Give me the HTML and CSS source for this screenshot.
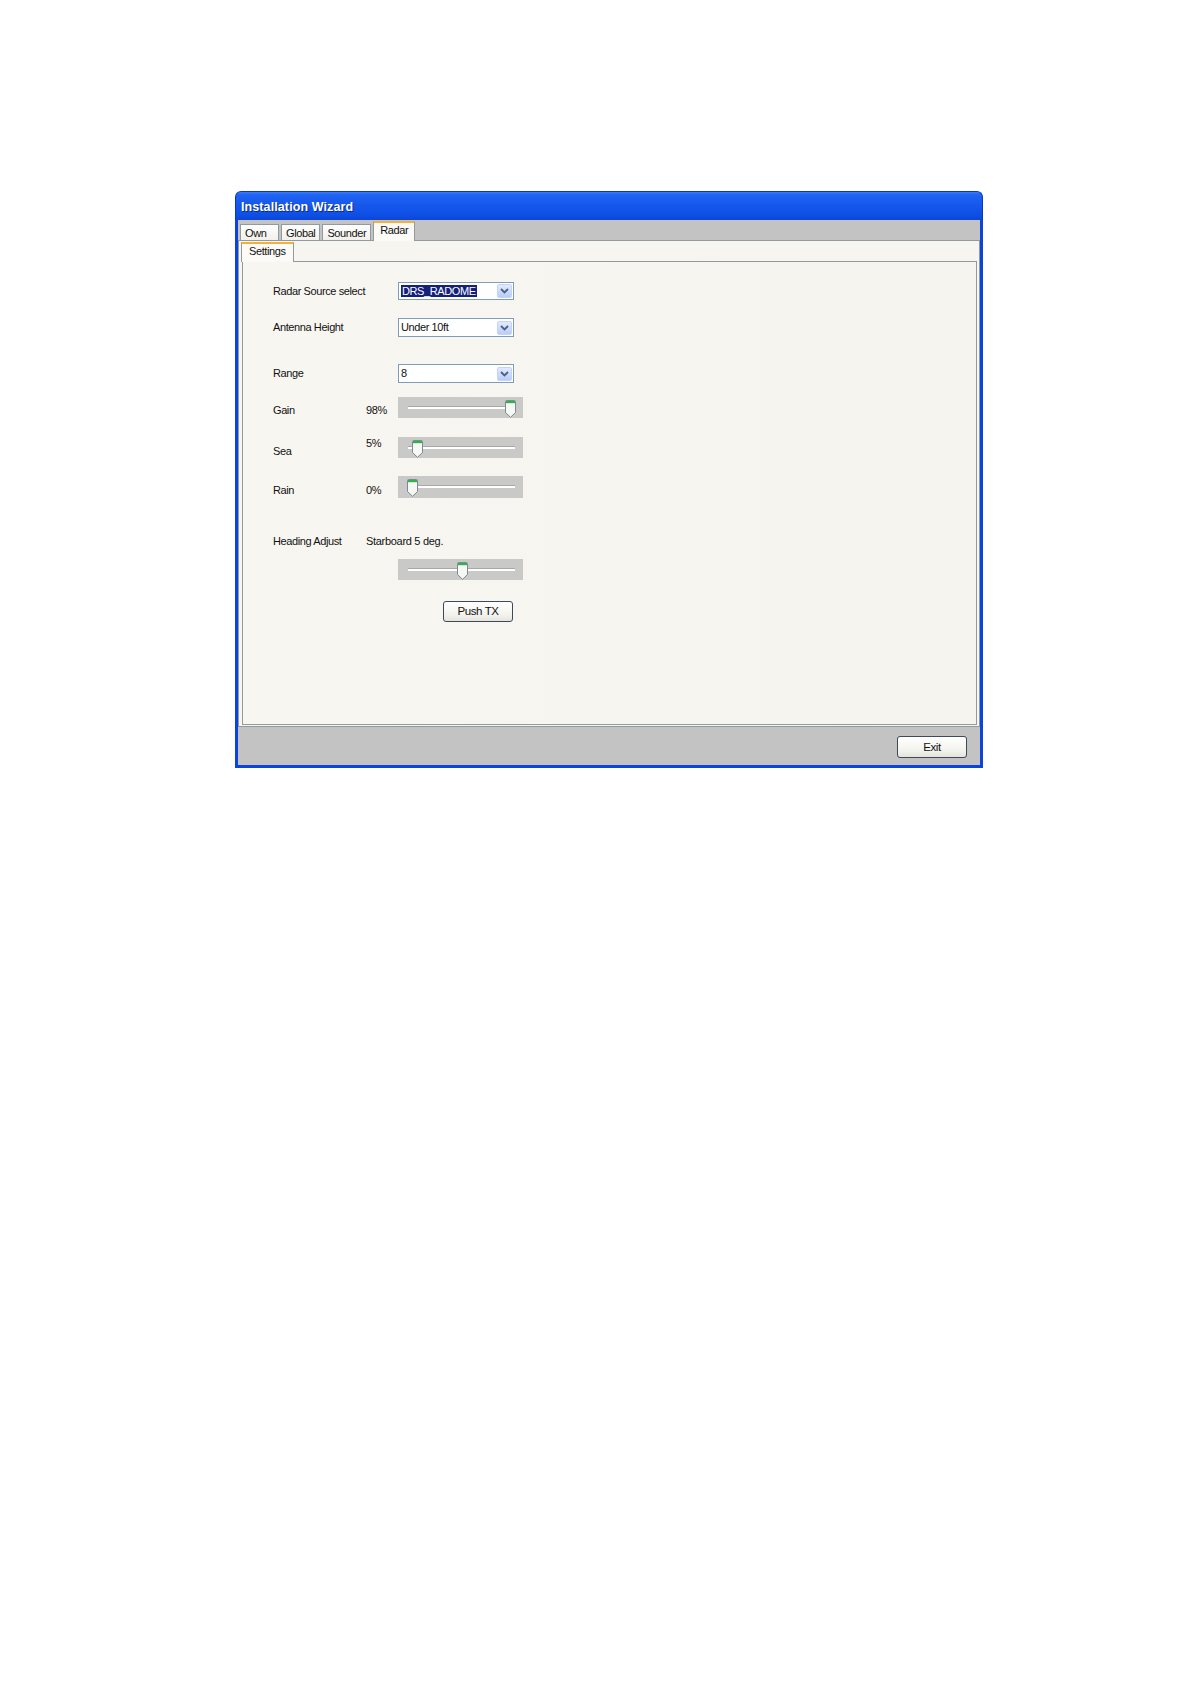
FILE: index.html
```html
<!DOCTYPE html>
<html>
<head>
<meta charset="utf-8">
<link rel="stylesheet" href="styles.css">
</head>
<body>
<div class="window">
  <div class="titlebar"><span class="title">Installation Wizard</span></div>
  <div class="frame">
    <div class="tabstrip">
      <div class="tab tab-own">Own</div>
      <div class="tab">Global</div>
      <div class="tab">Sounder</div>
      <div class="tab tab-active">Radar</div>
    </div>
    <div class="page">
      <div class="subtabstrip">
        <div class="subtab">Settings</div>
      </div>
      <div class="subpanel">
        <div class="row row1">
          <div class="label">Radar Source select</div>
          <div class="value"></div>
          <div class="combo"><span class="combo-text"><span class="selected">DRS_RADOME</span></span><span class="combo-btn"><svg width="9" height="6" viewBox="0 0 9 6"><path d="M1 1 L4.5 4.5 L8 1" fill="none" stroke="#4d6185" stroke-width="1.8"/></svg></span></div>
        </div>
        <div class="row row2">
          <div class="label">Antenna Height</div>
          <div class="value"></div>
          <div class="combo"><span class="combo-text">Under 10ft</span><span class="combo-btn"><svg width="9" height="6" viewBox="0 0 9 6"><path d="M1 1 L4.5 4.5 L8 1" fill="none" stroke="#4d6185" stroke-width="1.8"/></svg></span></div>
        </div>
        <div class="row row3">
          <div class="label">Range</div>
          <div class="value"></div>
          <div class="combo"><span class="combo-text">8</span><span class="combo-btn"><svg width="9" height="6" viewBox="0 0 9 6"><path d="M1 1 L4.5 4.5 L8 1" fill="none" stroke="#4d6185" stroke-width="1.8"/></svg></span></div>
        </div>
        <div class="row row4">
          <div class="label off8">Gain</div>
          <div class="value off8">98%</div>
          <div class="slider"><div class="track"></div><svg class="thumb" style="left:107px" width="11" height="18" viewBox="0 0 11 18"><path d="M0.5 1.5 Q0.5 0.5 1.5 0.5 H9.5 Q10.5 0.5 10.5 1.5 V12.5 L5.5 17.3 L0.5 12.5 Z" fill="#f7f7f4" stroke="#7b8a96"/><path d="M1 1 H10 V3.2 H1 Z" fill="#2fb34a"/></svg></div>
        </div>
        <div class="row row5">
          <div class="label off9">Sea</div>
          <div class="value">5%</div>
          <div class="slider"><div class="track"></div><svg class="thumb" style="left:14px" width="11" height="18" viewBox="0 0 11 18"><path d="M0.5 1.5 Q0.5 0.5 1.5 0.5 H9.5 Q10.5 0.5 10.5 1.5 V12.5 L5.5 17.3 L0.5 12.5 Z" fill="#f7f7f4" stroke="#7b8a96"/><path d="M1 1 H10 V3.2 H1 Z" fill="#2fb34a"/></svg></div>
        </div>
        <div class="row row6">
          <div class="label off9">Rain</div>
          <div class="value off9">0%</div>
          <div class="slider"><div class="track"></div><svg class="thumb" style="left:9px" width="11" height="18" viewBox="0 0 11 18"><path d="M0.5 1.5 Q0.5 0.5 1.5 0.5 H9.5 Q10.5 0.5 10.5 1.5 V12.5 L5.5 17.3 L0.5 12.5 Z" fill="#f7f7f4" stroke="#7b8a96"/><path d="M1 1 H10 V3.2 H1 Z" fill="#2fb34a"/></svg></div>
        </div>
        <div class="row row7">
          <div class="label">Heading Adjust</div>
          <div class="value value-wide">Starboard 5 deg.</div>
        </div>
        <div class="row row8">
          <div class="label"></div>
          <div class="value"></div>
          <div class="slider"><div class="track"></div><svg class="thumb" style="left:59px" width="11" height="18" viewBox="0 0 11 18"><path d="M0.5 1.5 Q0.5 0.5 1.5 0.5 H9.5 Q10.5 0.5 10.5 1.5 V12.5 L5.5 17.3 L0.5 12.5 Z" fill="#f7f7f4" stroke="#7b8a96"/><path d="M1 1 H10 V3.2 H1 Z" fill="#2fb34a"/></svg></div>
        </div>
        <div class="row row9">
          <div class="label"></div>
          <div class="value"></div>
          <div class="btn-cell"><div class="button push">Push TX</div></div>
        </div>
      </div>
    </div>
    <div class="footer">
      <div class="button exit">Exit</div>
    </div>
  </div>
</div>
</body>
</html>
```

FILE: styles.css
```css
html, body {
  margin: 0;
  padding: 0;
  background: #ffffff;
}
body {
  width: 1190px;
  height: 1684px;
  font-family: "Liberation Sans", Arial, sans-serif;
  font-size: 11px;
  color: #111111;
}
.window {
  margin: 191px 0 0 235px;
  width: 748px;
}
.titlebar {
  height: 29px;
  box-sizing: border-box;
  border-radius: 6px 6px 0 0;
  background: linear-gradient(to bottom, #3a7cf6 0%, #1f63f2 10%, #1658ec 45%, #0e50e6 80%, #0a46d8 100%);
  border: 1px solid #0838c0;
  border-bottom: 0;
  padding-left: 5px;
  display: flex;
  align-items: center;
}
.title {
  color: #ffffff;
  font-weight: bold;
  font-size: 12.5px;
  letter-spacing: 0.1px;
  text-shadow: 1px 1px 0 #0a2a8a;
  padding-top: 2px;
}
.frame {
  border: 3px solid #0b43dc;
  border-top: 0;
  background: #c3c3c3;
}
.tabstrip {
  height: 20px;
  display: flex;
  align-items: flex-end;
  padding-left: 2px;
  gap: 2px;
}
.tab {
  height: 16px;
  box-sizing: border-box;
  border: 1px solid #919b9c;
  border-bottom: 0;
  background: linear-gradient(to bottom, #ffffff, #f1f0ea);
  padding: 1px 4px 0 4px;
  line-height: 15px;
  letter-spacing: -0.4px;
  font-size: 11px;
}
.tab-own {
  width: 39px;
}
.tab-active {
  height: 20px;
  border-top: 2px solid #f4b13a;
  background: #fbfaf6;
  padding: 0 6px 0 6px;
  line-height: 14px;
  margin-bottom: -1px;
  position: relative;
  z-index: 1;
}
.page {
  height: 487px;
  box-sizing: border-box;
  border: 1px solid #919b9c;
  background: #f7f5f0;
  padding: 0 2px 1px 3px;
}
.subtabstrip {
  height: 20px;
  display: flex;
  align-items: flex-end;
}
.subtab {
  margin-left: -1px;
  height: 20px;
  box-sizing: border-box;
  border: 1px solid #919b9c;
  border-top: 2px solid #f4b13a;
  border-bottom: 0;
  background: #fbfaf6;
  padding: 0 7px;
  line-height: 15px;
  letter-spacing: -0.4px;
  margin-bottom: -1px;
  position: relative;
  z-index: 1;
}
.subpanel {
  height: 464px;
  box-sizing: border-box;
  border: 1px solid #919b9c;
  background: linear-gradient(to right, #f8f6f1, #f6f4ef);
  padding-left: 30px;
}
.row {
  display: grid;
  grid-template-columns: 93px 32px 125px;
  align-items: center;
}
.label, .value {
  line-height: 13px;
  letter-spacing: -0.4px;
  white-space: nowrap;
}
.value-wide {
  grid-column: 2 / span 2;
  letter-spacing: -0.3px;
}
.off8 { align-self: start; margin-top: 7px; }
.off9 { align-self: start; margin-top: 8px; }
.row5 .value { align-self: start; margin-top: 0; }
.row1 { margin-top: 20px; height: 18px; }
.row2 { margin-top: 18px; height: 19px; }
.row3 { margin-top: 27px; height: 19px; }
.row4 { margin-top: 14px; height: 21px; }
.row5 { margin-top: 19px; height: 21px; }
.row6 { margin-top: 18px; height: 22px; }
.row7 { margin-top: 37px; height: 13px; }
.row8 { margin-top: 11px; height: 21px; }
.row9 { margin-top: 20px; height: 22px; }
.combo {
  width: 116px;
  height: 100%;
  box-sizing: border-box;
  border: 1px solid #7f9db9;
  background: #ffffff;
  display: flex;
  align-items: center;
  justify-content: space-between;
  padding: 0 1px 0 2px;
}
.combo-text {
  letter-spacing: -0.4px;
  line-height: 13px;
}
.selected {
  background: #14207a;
  color: #ffffff;
  padding: 0 1px;
}
.combo-btn {
  width: 15px;
  height: 14px;
  box-sizing: border-box;
  border: 1px solid #c3d3fd;
  border-radius: 2px;
  background: linear-gradient(to bottom, #e2eafe, #b9cdf7);
  display: flex;
  align-items: center;
  justify-content: center;
}
.slider {
  position: relative;
  width: 125px;
  height: 100%;
  background: #c9c9c7;
}
.track {
  position: absolute;
  left: 10px;
  right: 8px;
  top: 50%;
  margin-top: -2px;
  height: 3px;
  box-sizing: border-box;
  border-top: 1px solid #a8a8a4;
  background: #ffffff;
}
.thumb {
  position: absolute;
  top: 3px;
}
.btn-cell {
  padding-left: 45px;
}
.button {
  box-sizing: border-box;
  height: 21px;
  width: 70px;
  border: 1px solid #3c4a5c;
  border-radius: 3px;
  background: linear-gradient(to bottom, #ffffff, #f2f2ec 70%, #e4e3dc);
  text-align: center;
  line-height: 19px;
  font-size: 11.5px;
  letter-spacing: -0.4px;
}
.footer {
  height: 38px;
  box-sizing: border-box;
  padding: 9px 13px 0 0;
  display: flex;
  justify-content: flex-end;
  align-items: flex-start;
  background: #c3c3c3;
}
.exit {
  width: 70px;
  height: 22px;
  line-height: 20px;
}
```
